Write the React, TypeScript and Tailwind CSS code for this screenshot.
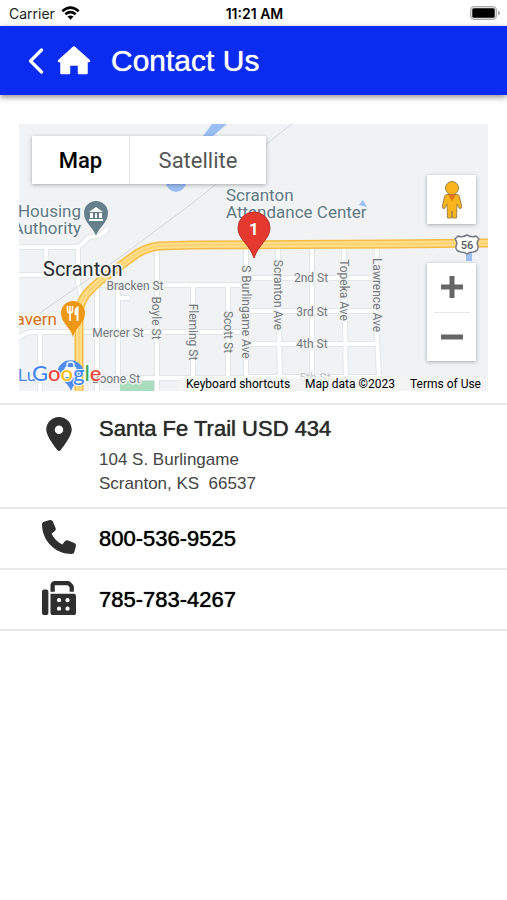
import React from "react";
import { FaFax, FaLocationDot, FaPhone } from "react-icons/fa6";

type Road = {
  name: string;
  d: string;
};

type StreetLabel = {
  name: string;
  x: number;
  y: number;
  vertical?: boolean;
};

const roads: Road[] = [
  { name: "authority", d: "M0 123H56Q61 123 64 119L70 113Q86 112 88 104" },
  { name: "west-1", d: "M27 123V151H0" },
  { name: "west-2", d: "M59 123V160L64 176" },
  { name: "mercer", d: "M0 214Q6 208 16 208H221" },
  { name: "west-3", d: "M21 209V267" },
  { name: "bracken", d: "M78 161H221" },
  { name: "alley-1", d: "M78 161V267" },
  { name: "alley-2", d: "M99 161V254M99 174H110" },
  { name: "boone", d: "M64 254H227" },
  { name: "boyle", d: "M138 121V267" },
  { name: "fleming", d: "M174 161V267" },
  { name: "scott", d: "M209 161V267" },
  { name: "burlingame", d: "M227 121V267" },
  { name: "scranton", d: "M259 121L261 267" },
  { name: "third", d: "M293 121V267" },
  { name: "topeka", d: "M325 121L327 267" },
  { name: "lawrence", d: "M358 121L356 175L360 252" },
  { name: "2nd", d: "M227 154H357" },
  { name: "3rd", d: "M227 187H357" },
  { name: "4th", d: "M227 220H358" },
  { name: "5th", d: "M227 253H360" },
];

const streetLabels: StreetLabel[] = [
  { name: "Bracken St", x: 116, y: 166 },
  { name: "Mercer St", x: 99, y: 213 },
  { name: "Boone St", x: 97, y: 259 },
  { name: "2nd St", x: 292, y: 158 },
  { name: "3rd St", x: 293, y: 192 },
  { name: "4th St", x: 293, y: 224 },
  { name: "Boyle St", x: 133, y: 194, vertical: true },
  { name: "Fleming St", x: 170, y: 208, vertical: true },
  { name: "Scott St", x: 205, y: 208, vertical: true },
  { name: "S Burlingame Ave", x: 223, y: 188, vertical: true },
  { name: "Scranton Ave", x: 255, y: 171, vertical: true },
  { name: "Topeka Ave", x: 321, y: 166, vertical: true },
  { name: "Lawrence Ave", x: 354, y: 171, vertical: true },
];

const highway =
  "M60 270V192Q60 176 72 165L82 156L112 134Q124 124 140 122L171 121L371 120L469 119";

function StreetMap() {
  return (
    <svg
      viewBox="0 0 469 267"
      preserveAspectRatio="xMidYMid slice"
      className="block h-full w-full"
      fontFamily="Roboto, sans-serif"
      role="img"
      aria-label="Map of Scranton"
    >
      <rect width="469" height="267" fill="#f0f2f3" />
      <path d="M193 0H208L194 12H184Z" fill="#9bbff5" />
      <circle cx="157" cy="58" r="10" fill="#9bbff5" />
      <path d="M340 81L344 76L348 83Z" fill="#9bbff5" />
      <rect x="447" y="128" width="6" height="9" fill="#9bbff5" />
      <rect x="101" y="257" width="34" height="10" fill="#a9dcbc" />

      <g fill="none" stroke="#e2e5e7" strokeWidth="6">
        {roads.map((road) => (
          <path key={road.name} d={road.d} />
        ))}
      </g>
      <g fill="none" stroke="#ffffff" strokeWidth="4">
        {roads.map((road) => (
          <path key={road.name} d={road.d} />
        ))}
      </g>
      <path d="M274 -1L171 81L104 131L21 189" fill="none" stroke="#d3d6d8" />

      <g fill="none">
        <path d={highway} stroke="#f6bc45" strokeWidth="9" />
        <path d={highway} stroke="#ffdc86" strokeWidth="6" />
        <path d={highway} stroke="#f9cd68" strokeWidth="1" />
      </g>

      <g
        fontSize="12"
        fill="#75797e"
        stroke="#f0f2f3"
        strokeWidth="3"
        strokeLinejoin="round"
        textAnchor="middle"
        paintOrder="stroke"
      >
        {streetLabels.map((label) => (
          <text
            key={label.name}
            x={label.x}
            y={label.y}
            transform={label.vertical ? `rotate(90 ${label.x} ${label.y})` : undefined}
          >
            {label.name}
          </text>
        ))}
        <text x="296" y="258" opacity="0.4">
          5th St
        </text>
      </g>

      {/* places */}
      <g
        fontSize="17"
        stroke="#f5f7f8"
        strokeWidth="3"
        strokeLinejoin="round"
        paintOrder="stroke"
      >
        <g fill="#607985">
          <text x="62" y="93" textAnchor="end">
            Housing
          </text>
          <text x="62" y="110" textAnchor="end">
            Authority
          </text>
          <text x="207" y="77">
            Scranton
          </text>
          <text x="207" y="94">
            Attendance Center
          </text>
        </g>
        <text x="38" y="201" textAnchor="end" fill="#d5700f">
          Tavern
        </text>
        <text x="-1" y="257" fill="#4a82e8">
          Lu
        </text>
        <text x="24" y="152" fontSize="20" fill="#2b2d30">
          Scranton
        </text>
      </g>

      {/* housing authority */}
      <path
        d="M77 112C75 104 65 99 65 89A12 12 0 0 1 89 89C89 99 79 104 77 112Z"
        fill="#65808a"
      />
      <path
        d="M70 88L77 83L84 88ZM71 89H74V94H71ZM76 89H78V94H76ZM80 89H83V94H80ZM70 95H84V97H70Z"
        fill="#ffffff"
      />

      {/* tavern */}
      <path
        d="M54 213C52 204 42 199 42 189A12 12 0 0 1 66 189C66 199 56 204 54 213Z"
        fill="#ee9713"
      />
      <path
        d="M48.5 182V186.5Q48.500 189 51 189T53.500 186.500V182M51 182V197"
        fill="none"
        stroke="#ffffff"
        strokeWidth="1.6"
      />
      <path d="M59.500 182V197H57.500V191H55.500V187Q56 183 59.500 182Z" fill="#ffffff" />

      {/* shop */}
      <path
        d="M52 267C50 259 39 255 39 245A13 12 0 0 1 64 245C64 255 54 259 52 267Z"
        fill="#4f8bf0"
      />
      <path d="M46 243H57L59 253H44Z" fill="#ffffff" />
      <path
        d="M48 243V241Q48 238 51.500 238T55 241V243"
        fill="none"
        stroke="#ffffff"
        strokeWidth="1.5"
      />

      {/* route shield */}
      <path
        d="M439 112Q443 114 448 111Q453 114 457 112L460 115Q457 119 459 122Q460 127 454 128Q450 128 448 130Q446 128 442 128Q436 127 437 122Q439 119 436 115Z"
        fill="#ffffff"
        stroke="#777b80"
        strokeWidth="1.5"
        strokeLinejoin="round"
      />
      <text x="448" y="125" fontSize="11" fontWeight="500" fill="#55585c" textAnchor="middle">
        56
      </text>

      {/* selected location */}
      <path
        d="M235 134C231 121 219 115 219 104A16 16 0 0 1 251 104C251 115 239 121 235 134Z"
        fill="#e5382e"
        stroke="#b9312a"
      />
      <text x="235" y="111" fontSize="17" fontWeight="700" fill="#ffffff" textAnchor="middle">
        1
      </text>

      <text
        x="13"
        y="257"
        fontSize="22"
        fontWeight="500"
        fontFamily="Lato, sans-serif"
        stroke="#ffffff"
        strokeWidth="2"
        paintOrder="stroke"
      >
        <tspan fill="#4285f4">G</tspan>
        <tspan fill="#ea4335">o</tspan>
        <tspan fill="#fbbc05">o</tspan>
        <tspan fill="#4285f4">g</tspan>
        <tspan fill="#34a853">l</tspan>
        <tspan fill="#ea4335">e</tspan>
      </text>
    </svg>
  );
}

function Pegman() {
  return (
    <svg viewBox="0 0 24 40" className="h-10 w-6" aria-hidden="true">
      <g fill="#f8b51d" stroke="#a38245" strokeWidth="1" strokeLinejoin="round">
        <path d="M7 14.500Q5 14.500 4.500 17L2.200 27Q2.500 29 4.500 28.500L7 24L7.500 38H11.500L12 31L12.500 38H16.500L17 24L19.500 28.500Q21.500 29 21.800 27L19.500 17Q19 14.500 17 14.500Z" />
        <circle cx="12" cy="8" r="6.500" />
      </g>
      <path d="M8 14.500H16L12 21Z" fill="#e5731a" />
    </svg>
  );
}

function StatusBar() {
  return (
    <div className="grid h-[26px] grid-cols-3 items-center pr-[7px] pl-[9px] font-['Inter',sans-serif] text-[14px] text-[#222]">
      <div className="flex items-center gap-[6px]">
        <span>Carrier</span>
        <svg viewBox="0 0 19 14" className="h-[14px] w-[19px]" aria-hidden="true">
          <g fill="none" stroke="#000" strokeWidth="2.6">
            <path d="M1.300 5.200Q9.500 -1.800 17.700 5.200" />
            <path d="M4.300 8.300Q9.500 4 14.700 8.300" />
          </g>
          <path d="M6.500 10.500Q9.500 8.300 12.500 10.500L9.500 13.700Z" />
        </svg>
      </div>
      <span className="text-center font-semibold text-black">11:21 AM</span>
      <svg viewBox="0 0 30 14" className="h-[14px] w-[30px] justify-self-end" aria-hidden="true">
        <rect x="0.500" y="0.500" width="26" height="13" rx="3.500" fill="#ddd" stroke="#aaa" />
        <rect x="2.300" y="2.300" width="22.400" height="9.400" rx="1.500" />
        <path d="M28 4.500Q30 5 30 7T28 9.500Z" fill="#aaa" />
      </svg>
    </div>
  );
}

function Header() {
  return (
    <header className="flex h-[69px] items-center bg-[#0a2cf0] pl-7 text-white shadow-[0_2px_6px_rgba(0,0,0,0.45)]">
      <button type="button" aria-label="Back">
        <svg viewBox="0 0 16 26" className="h-[26px] w-4" aria-hidden="true">
          <path
            d="M13.500 2L2.500 13L13.500 24"
            fill="none"
            stroke="currentColor"
            strokeWidth="3.200"
            strokeLinecap="round"
            strokeLinejoin="round"
          />
        </svg>
      </button>
      <button type="button" aria-label="Home" className="ml-[13px]">
        <svg viewBox="0 0 34 30" className="h-[30px] w-[34px]" aria-hidden="true">
          <path
            d="M17 1.500L32 15H29.500V27H22V18.500H12V27H4.500V15H2Z"
            fill="currentColor"
            stroke="currentColor"
            strokeWidth="2.500"
            strokeLinejoin="round"
          />
        </svg>
      </button>
      <h1 className="ml-5 text-[30px] leading-9 [text-shadow:0_0_1px_currentColor]">Contact Us</h1>
    </header>
  );
}

function MapPanel() {
  return (
    <section className="relative mx-[19px] mt-[29px] h-[267px] overflow-hidden font-['Roboto',sans-serif]">
      <StreetMap />
      <div className="absolute top-3 left-[13px] flex h-12 bg-white text-[22px] shadow-[0_1px_4px_rgba(0,0,0,0.3)]">
        <button type="button" className="w-[98px] border-r border-[#e6e6e6] font-medium text-black">
          Map
        </button>
        <button type="button" className="w-[136px] text-[#565656]">
          Satellite
        </button>
      </div>
      <button
        type="button"
        aria-label="Street View"
        className="absolute top-[51px] right-3 flex size-[49px] items-center justify-center bg-white shadow-[0_1px_4px_rgba(0,0,0,0.3)]"
      >
        <Pegman />
      </button>
      <div className="absolute top-[139px] right-3 flex h-[98px] w-[49px] flex-col items-center bg-white shadow-[0_1px_4px_rgba(0,0,0,0.3)]">
        <button type="button" aria-label="Zoom in" className="flex flex-1 items-center">
          <svg viewBox="0 0 22 22" className="size-[22px]" aria-hidden="true">
            <path d="M0 11H22M11 0V22" stroke="#666" strokeWidth="5" />
          </svg>
        </button>
        <div className="h-px w-9 bg-[#e6e6e6]" />
        <button type="button" aria-label="Zoom out" className="flex flex-1 items-center">
          <svg viewBox="0 0 22 22" className="size-[22px]" aria-hidden="true">
            <path d="M0 11H22" stroke="#666" strokeWidth="5" />
          </svg>
        </button>
      </div>
      <div className="absolute right-0 bottom-0 flex gap-px text-[12px] leading-[14px] text-black">
        <button type="button" className="bg-[#f5f5f5]/70 px-[7px]">
          Keyboard shortcuts
        </button>
        <span className="bg-[#f5f5f5]/70 px-[7px]">Map data ©2023</span>
        <a href="#terms" className="bg-[#f5f5f5]/70 px-[7px]">
          Terms of Use
        </a>
      </div>
    </section>
  );
}

export default function App() {
  return (
    <div className="min-h-screen bg-white font-['Liberation_Sans',Arial,sans-serif]">
      <StatusBar />
      <Header />
      <main>
        <MapPanel />
        <ul className="mt-3 border-t-2 border-[#e8e8e8]">
          <li className="flex h-[104px] gap-[22px] border-b-2 border-[#e8e8e8] pt-3 pl-[41px]">
            <FaLocationDot className="h-[34px] w-9 shrink-0 text-[#2f2f2f]" />
            <div className="text-[17px] leading-6 text-[#444]">
              <h2 className="mb-[7px] text-[22px] text-[#2b2b2b] [text-shadow:0_0_1px_currentColor]">
                Santa Fe Trail USD 434
              </h2>
              <p>104 S. Burlingame</p>
              <p className="whitespace-pre">Scranton, KS  66537</p>
            </div>
          </li>
          <li className="flex h-[61px] items-center gap-[22px] border-b-2 border-[#e8e8e8] pl-[41px]">
            <FaPhone className="mb-1 h-[34px] w-9 shrink-0 text-[#2f2f2f]" />
            <a
              href="tel:8005369525"
              className="text-[22px] text-black [text-shadow:0_0_1px_currentColor]"
            >
              800-536-9525
            </a>
          </li>
          <li className="flex h-[61px] items-center gap-[22px] border-b-2 border-[#e8e8e8] pl-[41px]">
            <FaFax className="mb-1 h-[34px] w-9 shrink-0 text-[#2f2f2f]" />
            <a
              href="tel:7857834267"
              className="text-[22px] text-black [text-shadow:0_0_1px_currentColor]"
            >
              785-783-4267
            </a>
          </li>
        </ul>
      </main>
    </div>
  );
}
